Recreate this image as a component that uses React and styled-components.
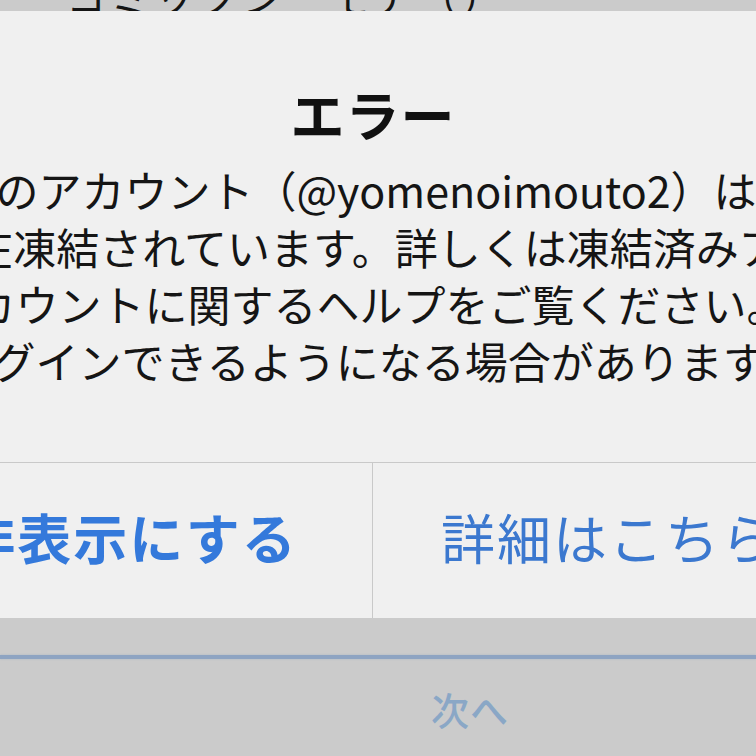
import React from "react";
import styled, { createGlobalStyle } from "styled-components";

const GlobalStyle = createGlobalStyle`
  html, body {
    margin: 0;
    padding: 0;
    background: #cbcbcb;
  }
  body {
    font-family: "Noto Sans CJK JP", "Noto Sans", sans-serif;
  }
`;

const StyledPage = styled.div`
  width: 756px;
  height: 756px;
  overflow: hidden;
  background: #cbcbcb;
  display: flex;
  flex-direction: column;
`;

const StyledTopStrip = styled.div`
  height: 11px;
  flex-shrink: 0;
  overflow: hidden;
  background: #cbcbcb;
`;

const StyledTopText = styled.p`
  margin: -24px 0 0 66px;
  font-size: 40px;
  line-height: 40px;
  color: #141414;
  white-space: nowrap;
  letter-spacing: 4px;
`;

const StyledAlert = styled.div`
  width: 1000px;
  margin-left: -127px;
  flex-shrink: 0;
  background: #f0f0f0;
  display: flex;
  flex-direction: column;
`;

const StyledTitle = styled.h1`
  margin: 0;
  padding-top: 73px;
  font-size: 54px;
  line-height: 60px;
  font-weight: 700;
  color: #111;
  text-align: center;
  letter-spacing: 1px;
`;

const StyledMessage = styled.div`
  padding: 17px 0 73px;
  display: flex;
  flex-direction: column;
  align-items: center;
`;

const StyledLine = styled.p`
  margin: 0;
  font-size: 43px;
  line-height: 57px;
  color: #151515;
  white-space: nowrap;
  transform: translateX(${(p) => p.shift || 0}px);
`;

const StyledButtonRow = styled.div`
  height: 155px;
  border-top: 1.5px solid #c9c9c9;
  display: grid;
  grid-template-columns: 500px 500px;
`;

const StyledButton = styled.button`
  border: none;
  border-right: ${(p) => (p.divider ? "1.5px solid #c9c9c9" : "none")};
  background: transparent;
  padding: 0 ${(p) => p.padRight || 0}px 9px ${(p) => p.padLeft || 0}px;
  font-family: "Noto Sans CJK JP", "Noto Sans", sans-serif;
  font-size: 54px;
  font-weight: ${(p) => (p.bold ? 700 : 400)};
  color: ${(p) => (p.bold ? "#3479db" : "#3b78cf")};
  letter-spacing: 2px;
  white-space: nowrap;
  display: flex;
  align-items: center;
  justify-content: center;
`;

const StyledBottom = styled.div`
  flex: 1;
  display: flex;
  flex-direction: column;
  background: #cbcbcb;
`;

const StyledFieldLine = styled.div`
  margin-top: 37px;
  height: 4px;
  background: #8ea4c2;
  box-shadow: 0 0 2px rgba(142, 164, 194, 0.6);
`;

const StyledNextRow = styled.div`
  flex: 1;
  display: flex;
  align-items: center;
  padding: 2px 0 0 431px;
`;

const StyledNext = styled.span`
  font-size: 38px;
  font-weight: 500;
  color: #8aa7c6;
  letter-spacing: 1px;
`;

const lines = [
  { text: "このアカウント（@yomenoimouto2）は現", shift: 3 },
  { text: "在凍結されています。詳しくは凍結済みア", shift: 3 },
  { text: "カウントに関するヘルプをご覧ください。", shift: 8 },
  { text: "ログインできるようになる場合があります。", shift: 4 },
];

export default function App() {
  return (
    <>
      <GlobalStyle />
      <StyledPage>
        <StyledTopStrip>
          <StyledTopText>コミックシーモア（）</StyledTopText>
        </StyledTopStrip>
        <StyledAlert>
          <StyledTitle>エラー</StyledTitle>
          <StyledMessage>
            {lines.map((line) => (
              <StyledLine key={line.text} shift={line.shift}>
                {line.text}
              </StyledLine>
            ))}
          </StyledMessage>
          <StyledButtonRow>
            <StyledButton bold divider padLeft={14}>
              非表示にする
            </StyledButton>
            <StyledButton padRight={28}>詳細はこちら</StyledButton>
          </StyledButtonRow>
        </StyledAlert>
        <StyledBottom>
          <StyledFieldLine />
          <StyledNextRow>
            <StyledNext>次へ</StyledNext>
          </StyledNextRow>
        </StyledBottom>
      </StyledPage>
    </>
  );
}
